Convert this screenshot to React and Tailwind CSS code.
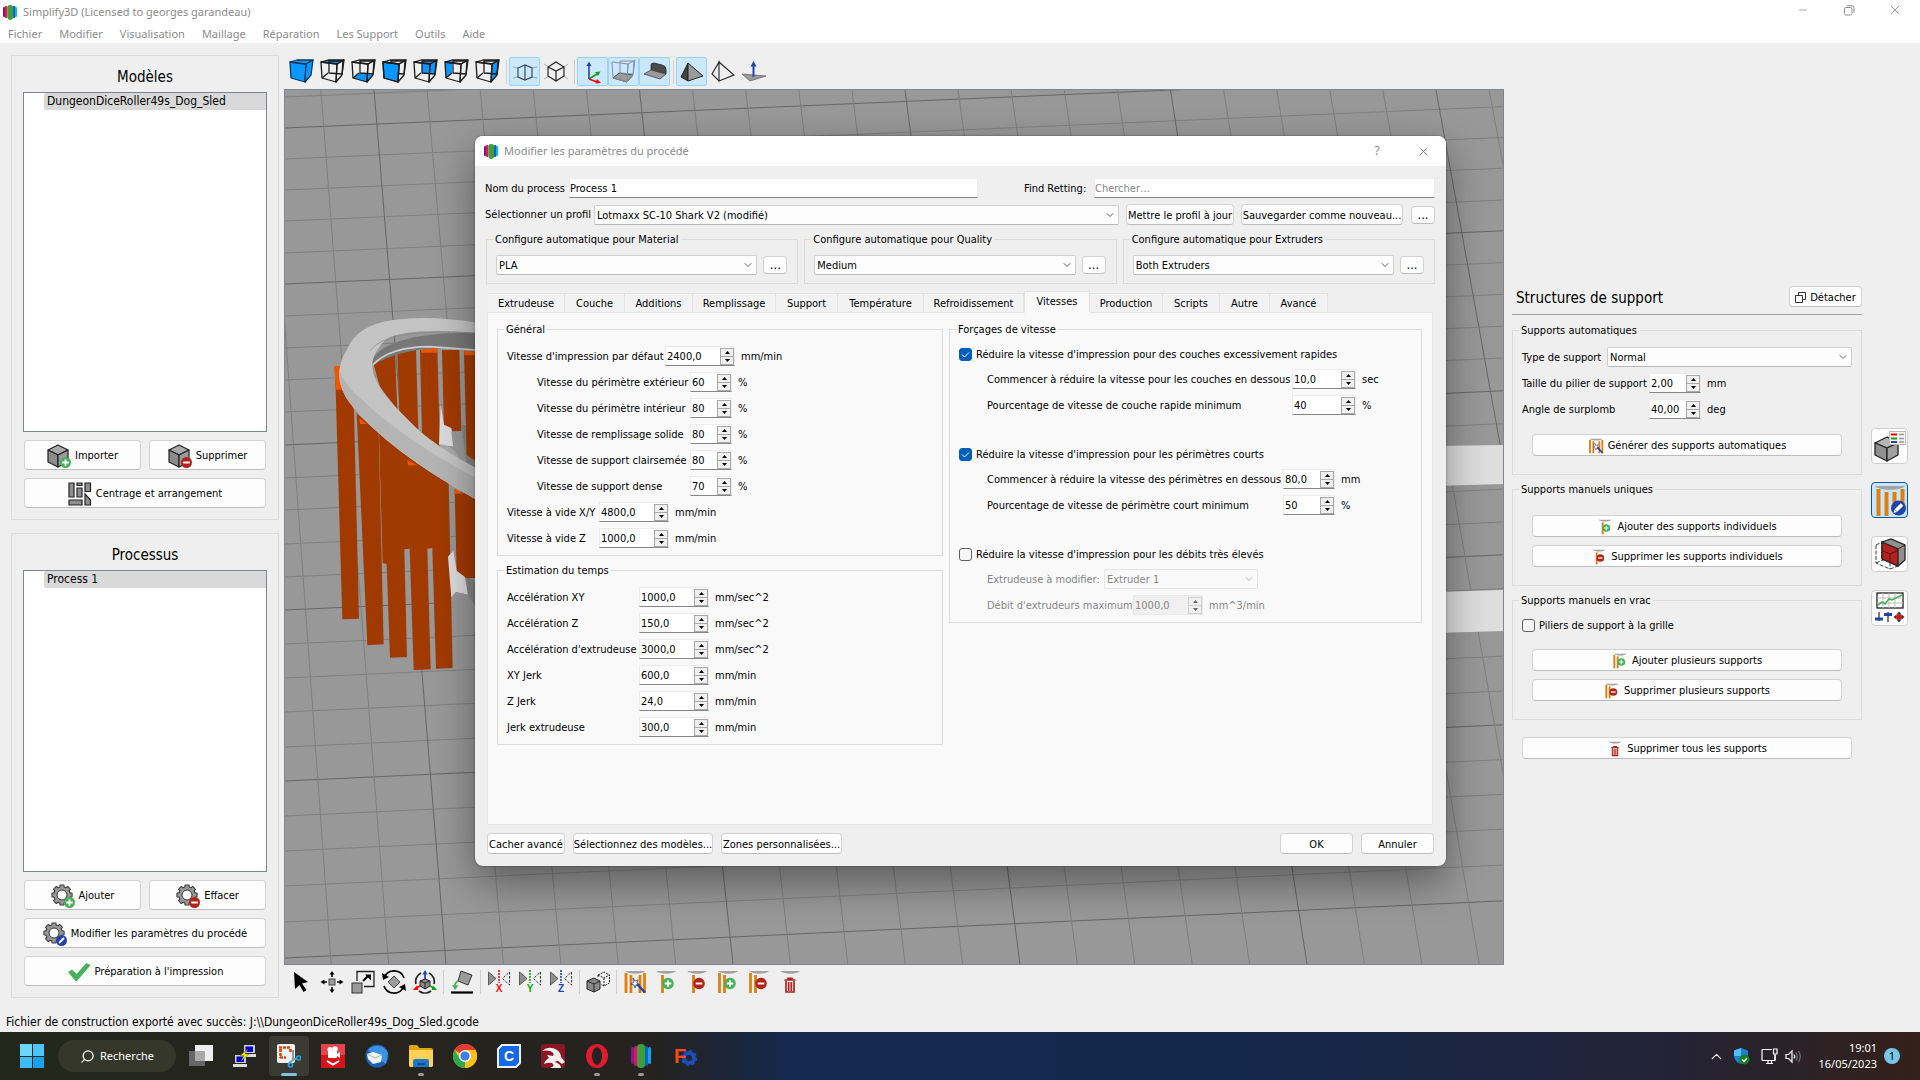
import React, { useId } from 'react';
import { ChevronDown, ChevronUp, Minus, Search, X } from 'lucide-react';

/* ---------- icons ---------- */

const FACES = {
    top: '1,3 8,1 24,1 17,5',
    bottom: '2,19 8,14 22,16 16,23',
    front: '1,3 17,5 16,23 2,19',
    back: '9,2 23,2 22,15 9,14',
    left: '1,3 8,1 8,14 2,19',
    right: '17,5 24,1 22,16 16,23',
};

const CubeView = ({ face }) => (
    <svg width="25" height="25" viewBox="0 0 25 25" fill="none" stroke="#1c1c1c" strokeWidth="1.3" strokeLinejoin="round">
        {face === 'all' ? (
            <g fill="#0a97ff" stroke="#0b3a5e">
                <polygon points={FACES.front} />
                <polygon points={FACES.top} />
                <polygon points={FACES.right} />
            </g>
        ) : (
            <>
                {face !== 'front' && <polygon points={FACES[face]} fill="#0a97ff" stroke="none" />}
                <polygon points={FACES.back} />
                <path d="M2 19 L8 14" />
                {face === 'front' && <polygon points={FACES.front} fill="#0a97ff" />}
                <polygon points={FACES.front} />
                <polygon points={FACES.top} />
                <polygon points={FACES.right} />
            </>
        )}
    </svg>
);

const Svg = ({ size = 24, box = 24, children }) => (
    <svg width={size} height={size} viewBox={`0 0 ${box} ${box}`} fill="none" className="shrink-0">
        {children}
    </svg>
);

const Badge = ({ kind, cx = 18.5, cy = 18.5, r = 5.5 }) => (
    <g>
        <circle cx={cx} cy={cy} r={r} fill={kind === 'plus' ? '#46b05a' : kind === 'minus' ? '#b3221c' : '#2244aa'} />
        {kind === 'plus' && <path d={`M${cx - 3.3} ${cy}h6.6M${cx} ${cy - 3.3}v6.6`} stroke="#fff" strokeWidth="1.8" />}
        {kind === 'minus' && <path d={`M${cx - 3.3} ${cy}h6.6`} stroke="#fff" strokeWidth="2" />}
        {kind === 'edit' && <path d={`M${cx - 2.5} ${cy + 2.5}l5 -5`} stroke="#fff" strokeWidth="2" />}
    </g>
);

const BoxIcon = ({ kind }) => (
    <Svg>
        <g stroke="#222" strokeWidth="1.2" strokeLinejoin="round">
            <path d="M1 6L11 1L21 6L11 11Z" fill="#a9a9a9" />
            <path d="M1 6L11 11V23L1 18Z" fill="#8b8b8b" />
            <path d="M21 6L11 11V23L21 18Z" fill="#9a9a9a" />
        </g>
        <Badge kind={kind} />
    </Svg>
);

// 8 teeth around the ring, dark outline first and the grey body over it
const GearIcon = ({ kind }) => (
    <Svg>
        {[0, 45, 90, 135].map((a) => (
            <rect key={a} x="8.4" y="0.4" width="5.2" height="21.2" rx="1" fill="#333" transform={`rotate(${a} 11 11)`} />
        ))}
        <circle cx="11" cy="11" r="8.8" fill="#333" />
        {[0, 45, 90, 135].map((a) => (
            <rect key={a} x="9.4" y="1.4" width="3.2" height="19.2" fill="#999" transform={`rotate(${a} 11 11)`} />
        ))}
        <circle cx="11" cy="11" r="7.8" fill="#999" />
        <circle cx="11" cy="11" r="5" fill="#fdfdfd" stroke="#333" />
        <Badge kind={kind} />
    </Svg>
);

const ArrangeIcon = () => (
    <Svg>
        <g fill="#8f8f8f" stroke="#222" strokeWidth="1.2">
            <path d="M1 1h5v14H1zM9 1h5v2.5H9zM9 6h5v9H9zM17 1h5.5v8.5H17zM1 18h13v5H1zM17 12l5.5 6v5H17z" />
        </g>
    </Svg>
);

const CheckIcon = () => (
    <Svg><path d="M1 12L5 9.5L9.5 14L19.5 3L23.5 5L10 21H8.5Z" fill="#46b05a" /></Svg>
);

const SupportIcon = ({ kind, size = 24, bars = 2 }) => (
    <Svg size={size}>
        <path d="M2 1H22C19 4.5 6 4.5 2 1Z" fill="#a3a3a3" />
        {kind === 'auto' && (
            <g>
                <path d="M3 3v20M8 5v18M17 5v18M21.5 3v20" stroke="#df7f0c" strokeWidth="2.8" />
                <path d="M10 8l2 3 3-1-1 3 3 2-4 0-1 3-1-3-3-1 3-2z" fill="#fff" stroke="#2244aa" strokeWidth="0.8" />
                <path d="M14 14L22 22.5" stroke="#2244aa" strokeWidth="2.4" />
            </g>
        )}
        {(kind === 'plus' || kind === 'minus') && (
            <g>
                {bars === 2 && <path d="M3.5 3v20" stroke="#df7f0c" strokeWidth="2.8" />}
                <path d="M8.5 5v18" stroke="#df7f0c" strokeWidth="2.8" />
                <Badge kind={kind} cx={14} cy={13.5} r={5.8} />
            </g>
        )}
        {kind === 'trash' && (
            <g stroke="#b3221c" strokeWidth="1.7">
                <path d="M6.5 10h11M10 9.5V8.3h4v1.2M8 11v11h8V11M10.7 12v9M13.3 12v9" />
            </g>
        )}
    </Svg>
);

const AppLogo = () => (
    <svg width="14" height="15" viewBox="0 0 14 15" className="shrink-0">
        <rect x="0" y="2" width="2" height="10" rx="1" fill="#6a1560" />
        <rect x="1.5" y="1" width="3" height="12" rx="1.3" fill="#e0116f" />
        <rect x="9.5" y="1" width="3" height="12" rx="1.3" fill="#1160d0" />
        <rect x="12" y="2" width="2" height="10" rx="1" fill="#12b5e5" />
        <rect x="4.5" y="0" width="5.5" height="15" rx="2.4" fill="#3da235" />
    </svg>
);

const MirrorIcon = ({ axis, color }) => (
    <Svg>
        <path d="M1.5 2v13L9 8.5Z" fill="#8f8f8f" stroke="#444" strokeWidth="0.8" />
        <path d="M12 0v13" stroke={color} strokeWidth="1.6" strokeDasharray="2 1" />
        <path d="M22.5 2v13L15.5 8.5Z" stroke="#333" strokeDasharray="2.5 1.5" />
        <text x="12" y="22" textAnchor="middle" fontSize="10" fontWeight="bold" fontFamily="Liberation Sans, sans-serif" fill={color}>{axis}</text>
    </Svg>
);

/* ---------- form controls ---------- */

const PushButton = ({ className = '', children }) => (
    <button type="button" className={`flex items-center justify-center whitespace-nowrap rounded border border-[#d2d2d2] border-b-[#bcbcbc] bg-[#fdfdfd] pt-[2px] ${className}`}>
        {children}
    </button>
);

const MoreButton = () => (
    <button type="button" className="h-[18px] w-6 shrink-0 rounded border border-[#d2d2d2] border-b-[#bcbcbc] bg-[#fdfdfd] text-[13px] leading-[14px]">...</button>
);

const TextField = ({ id, className = '', ...rest }) => (
    <input id={id} type="text" className={`h-5 min-w-0 border border-[#ececec] border-b-[#868686] bg-white pt-px outline-none placeholder:text-[#868686] ${className}`} {...rest} />
);

const Select = ({ id, value, className = '', disabled }) => (
    <div className={`relative h-5 ${className}`}>
        <select id={id} aria-label={value} disabled={disabled} className={`block h-full w-full appearance-none rounded-xs border pl-[2px] pr-5 pt-[2px] outline-none ${disabled ? 'border-[#e5e5e5] bg-[#fafafa] text-[#868686]' : 'border-[#d0d0d0] border-b-[#b8b8b8] bg-[#fdfdfd]'}`}>
            <option>{value}</option>
        </select>
        <ChevronDown size={12} strokeWidth={2} className={`pointer-events-none absolute right-[3px] top-1 ${disabled ? 'text-[#b5b5b5]' : 'text-[#606060]'}`} />
    </div>
);

const StepButton = ({ up, disabled }) => (
    <button type="button" aria-label={up ? 'Plus' : 'Moins'} disabled={disabled} className="flex h-[7px] w-full items-center justify-center bg-[#f0f0f0]">
        <svg width="5" height="3" viewBox="0 0 5 3"><path d={up ? 'M0 3L2.5 0L5 3Z' : 'M0 0L2.5 3L5 0Z'} fill={disabled ? '#666' : '#000'} /></svg>
    </button>
);

const Spin = ({ id, value, className = '', disabled }) => (
    <div className={`flex h-5 items-center border ${disabled ? 'border-[#e8e8e8] bg-[#f0f0f0]' : 'border-[#ececec] border-b-[#868686] bg-white'} ${className}`}>
        <input id={id} type="text" defaultValue={value} disabled={disabled} className="min-w-0 flex-1 bg-transparent pl-px pt-px outline-none" />
        <div className={`flex w-[14px] shrink-0 flex-col gap-px border ${disabled ? 'border-[#cfcfcf] bg-[#cfcfcf]' : 'border-[#a8a8a8] bg-[#a8a8a8]'}`}>
            <StepButton up disabled={disabled} />
            <StepButton disabled={disabled} />
        </div>
    </div>
);

const SpinRow = ({ label, labelClass, value, spinClass, unit, disabled }) => {
    const id = useId();
    return (
        <div className={`flex h-5 items-center whitespace-nowrap ${disabled ? 'text-[#868686]' : ''}`}>
            <label htmlFor={id} className={`shrink-0 pt-px ${labelClass}`}>{label}</label>
            <Spin id={id} value={value} className={`shrink-0 ${spinClass}`} disabled={disabled} />
            <span className="ml-[6px] pt-px">{unit}</span>
        </div>
    );
};

const Check = ({ label, checked }) => (
    <label className="flex h-5 items-center gap-1 whitespace-nowrap">
        <span className="relative flex">
            <input type="checkbox" defaultChecked={checked} className="peer size-[13px] appearance-none rounded-[3px] border border-[#606060] bg-[#f6f6f6] checked:border-[#005fb8] checked:bg-[#005fb8]" />
            <svg viewBox="0 0 13 13" className="pointer-events-none absolute inset-0 hidden size-[13px] peer-checked:block" fill="none"><path d="M3 6.5L5.5 9L10 4.5" stroke="#fff" /></svg>
        </span>
        <span className="pt-px">{label}</span>
    </label>
);

const Group = ({ title, className = '', bodyClass = '', children }) => (
    <fieldset className={`min-w-0 border border-[#dcdcdc] ${className}`}>
        <legend className="ml-[6px] h-[14px] px-[2px] leading-4">{title}</legend>
        <div className={bodyClass}>{children}</div>
    </fieldset>
);

/* ---------- window chrome ---------- */

const MENUS = ['Fichier', 'Modifier', 'Visualisation', 'Maillage', 'Réparation', 'Les Support', 'Outils', 'Aide'];

const TitleBar = () => (
    <header className="bg-white font-['Noto_Sans',sans-serif] text-[#8c8c8c]">
        <div className="flex h-6 items-center pl-[3px] pr-[2px]">
            <AppLogo />
            <span className="ml-[6px]">Simplify3D (Licensed to georges garandeau)</span>
            <div className="ml-auto flex items-center pb-1">
                <button type="button" aria-label="Réduire" className="flex w-[46px] justify-center"><Minus size={12} strokeWidth={1.5} /></button>
                <button type="button" aria-label="Restaurer" className="flex w-[46px] justify-center">
                    <svg width="11" height="11" viewBox="0 0 11 11" fill="none" stroke="currentColor"><rect x="0.5" y="2.5" width="7.5" height="7.5" rx="1.5" /><path d="M3 0.7h5a2 2 0 0 1 2 2v5" /></svg>
                </button>
                <button type="button" aria-label="Fermer" className="flex w-[46px] justify-center"><X size={14} strokeWidth={1.5} /></button>
            </div>
        </div>
        <nav className="flex h-[19px] items-center gap-px">
            {MENUS.map((m) => <button key={m} type="button" className="px-2">{m}</button>)}
        </nav>
    </header>
);

const ListPanel = ({ title, item, children }) => (
    <section className="flex flex-1 flex-col border border-[#dcdcdc] px-[11px] pb-[11px]">
        <h2 className="pt-[6px] text-center text-[15px] leading-[30px]">{title}</h2>
        <ul className="flex-1 border border-[#7f8590] bg-white">
            <li className="ml-5 rounded-l-xs bg-[#d9d9d9] pl-[3px] text-xs leading-[17px]">{item}</li>
        </ul>
        <div className="grid grid-cols-2 gap-2 px-px pt-2">{children}</div>
    </section>
);

const Sidebar = () => (
    <aside className="flex w-[284px] shrink-0 flex-col gap-[13px] pb-[14px] pl-[11px] pr-[5px] pt-3">
        <ListPanel title="Modèles" item="DungeonDiceRoller49s_Dog_Sled">
            <PushButton className="h-[30px] gap-1"><BoxIcon kind="plus" />Importer</PushButton>
            <PushButton className="h-[30px] gap-1"><BoxIcon kind="minus" />Supprimer</PushButton>
            <PushButton className="col-span-2 h-[30px] gap-1"><ArrangeIcon />Centrage et arrangement</PushButton>
        </ListPanel>
        <ListPanel title="Processus" item="Process 1">
            <PushButton className="h-[30px] gap-1"><GearIcon kind="plus" />Ajouter</PushButton>
            <PushButton className="h-[30px] gap-1"><GearIcon kind="minus" />Effacer</PushButton>
            <PushButton className="col-span-2 h-[30px] gap-1"><GearIcon kind="edit" />Modifier les paramètres du procédé</PushButton>
            <PushButton className="col-span-2 h-[30px] gap-1"><CheckIcon />Préparation à l'impression</PushButton>
        </ListPanel>
    </aside>
);

/* ---------- 3D view ---------- */

const ToolButton = ({ label, active, children }) => (
    <button type="button" aria-label={label} className={`flex h-[29px] w-[31px] items-center justify-center rounded-xs border ${active ? 'border-[#99d1ff] bg-[#cce8ff]' : 'border-transparent'}`}>
        {children}
    </button>
);

const Sep = () => <div className="ml-[3px] mr-[2px] h-6 w-px bg-[#cfcfcf]" />;

const ViewToolbar = () => (
    <div className="flex items-center px-[2px] pb-[3px] pt-[14px]">
        {['all', 'top', 'bottom', 'front', 'back', 'left', 'right'].map((f) => (
            <ToolButton key={f} label={f}><CubeView face={f} /></ToolButton>
        ))}
        <Sep />
        <ToolButton label="Perspective" active>
            <Svg>
                <path d="M0 7L5 8M24 7L19 8M0 18L5 17M24 18L19 17" stroke="#8aa" />
                <path d="M5 8L12 5L19 8V17L12 20L5 17ZM12 5V20" stroke="#3a4a56" strokeWidth="1.2" />
            </Svg>
        </ToolButton>
        <ToolButton label="Orthographique">
            <Svg>
                <path d="M0 4L5 7M24 4L20 7M0 19L5 16M24 19L20 16" stroke="#aaa" />
                <path d="M12 2L20 7V16L12 21L4 16V7ZM4 7L12 11L20 7M12 11V21" stroke="#222" strokeWidth="1.2" />
            </Svg>
        </ToolButton>
        <Sep />
        <ToolButton label="Axes" active>
            <Svg>
                <path d="M8 19V5" stroke="#2244aa" strokeWidth="1.6" /><path d="M5.5 6L8 1.5L10.5 6Z" fill="#2244aa" />
                <path d="M8 19L16 14" stroke="#12a012" strokeWidth="1.6" /><path d="M14 12L19.5 11.5L17 16Z" fill="#12a012" />
                <path d="M8 19L16 22" stroke="#f00" strokeWidth="1.6" /><path d="M14.5 23.5L20 23L16 19Z" fill="#f00" />
            </Svg>
        </ToolButton>
        <ToolButton label="Volume" active>
            <svg width="25" height="25" viewBox="0 0 25 25" fill="none" stroke="#7f93a2">
                <polygon points={FACES.bottom} fill="#9b9b9b" stroke="#444" />
                <polygon points={FACES.back} /><polygon points={FACES.front} /><polygon points={FACES.right} />
            </svg>
        </ToolButton>
        <ToolButton label="Plateau" active>
            <Svg>
                <path d="M8 5Q8 3 11 3L19 5Q23 6 23 9V14L8 10Z" fill="#4a4a4a" stroke="#222" strokeWidth="0.8" />
                <path d="M1 14L8 10L23 14L17 19Z" fill="#9b9b9b" stroke="#444" strokeWidth="0.8" />
            </Svg>
        </ToolButton>
        <Sep />
        <ToolButton label="Solide" active>
            <Svg>
                <path d="M8 3L1 17L8 21Z" fill="#444" stroke="#222" /><path d="M8 3L23 16L8 21Z" fill="#9b9b9b" stroke="#222" />
            </Svg>
        </ToolButton>
        <ToolButton label="Filaire">
            <Svg><path d="M8 2L1 14L8 21ZM8 2L23 15L8 21Z" stroke="#222" strokeWidth="1.1" /></Svg>
        </ToolButton>
        <ToolButton label="Normales">
            <Svg>
                <path d="M0 14L24 16L8 21Z" fill="#9b9b9b" stroke="#666" strokeWidth="0.8" />
                <path d="M11.5 17V5" stroke="#2244aa" strokeWidth="2" /><path d="M8.5 6.5L11.5 1L14.5 6.5Z" fill="#2244aa" />
            </Svg>
        </ToolButton>
    </div>
);

const EditToolbar = () => (
    <div className="flex items-center px-px pb-4 pt-[2px]">
        <ToolButton label="Sélection"><Svg><path d="M5 2L19 12L13 13.5L17.5 20L14.5 22L10.5 15L6 19Z" fill="#000" /></Svg></ToolButton>
        <ToolButton label="Déplacer">
            <Svg>
                <rect x="9" y="9" width="6" height="6" fill="#9b9b9b" stroke="#444" />
                <path d="M12 7V3M12 17v4M7 12H3M17 12h4" stroke="#000" strokeWidth="1.6" />
                <path d="M9.5 4.5L12 1L14.5 4.5ZM9.5 19.5L12 23L14.5 19.5ZM4.5 9.5L0.5 12L4.5 14.5ZM19.5 9.5L23.5 12L19.5 14.5Z" fill="#000" />
            </Svg>
        </ToolButton>
        <ToolButton label="Échelle">
            <Svg>
                <path d="M6 11V1.5H23V16.5H13" stroke="#222" strokeWidth="1.3" />
                <rect x="1" y="13" width="10" height="10" fill="#9b9b9b" stroke="#333" />
                <path d="M12 11L17 6" stroke="#000" strokeWidth="2" /><path d="M14 4.5H20V10.5Z" fill="#000" />
            </Svg>
        </ToolButton>
        <ToolButton label="Rotation">
            <Svg>
                <path d="M12 6L18 12L12 18L6 12Z" fill="#9b9b9b" stroke="#444" />
                <path d="M2.5 7A10.5 10.5 0 0 1 22 8M21.5 17A10.5 10.5 0 0 1 2 16" stroke="#000" strokeWidth="1.7" />
                <path d="M0 3L1 10L7 7ZM24 21L23 14L17 17Z" fill="#000" />
            </Svg>
        </ToolButton>
        <ToolButton label="Orienter">
            <Svg>
                <path d="M3 14A9.5 9.5 0 0 1 8 3M16 3A9.5 9.5 0 0 1 21 14M6 21A10 10 0 0 0 18 21" stroke="#222" strokeWidth="1.7" />
                <path d="M12 9L17 11V16L12 19L7 16V11Z" fill="#8b8b8b" stroke="#222" /><path d="M7 11L12 13L17 11M12 13V19" stroke="#222" />
                <path d="M12 9V4" stroke="#2244aa" strokeWidth="1.7" /><path d="M9.5 4.5L12 0L14.5 4.5Z" fill="#2244aa" />
                <path d="M7 16L3 18" stroke="#f00" strokeWidth="1.7" /><path d="M4 15.5L0 20L5.5 20Z" fill="#f00" />
                <path d="M17 16L21 18" stroke="#12a012" strokeWidth="1.7" /><path d="M20 15.5L24 20L18.5 20Z" fill="#12a012" />
            </Svg>
        </ToolButton>
        <Sep />
        <ToolButton label="Poser sur la table">
            <Svg>
                <path d="M11 1L22 5L18 15L8 11Z" fill="#9b9b9b" stroke="#333" />
                <path d="M8 11Q4 13 5 18" stroke="#46b05a" strokeWidth="1.6" /><path d="M2 15L5 20L8.5 15.5Z" fill="#46b05a" />
                <path d="M1 22.5h22" stroke="#000" strokeWidth="2.2" />
            </Svg>
        </ToolButton>
        <Sep />
        <ToolButton label="Miroir X"><MirrorIcon axis="X" color="#f01010" /></ToolButton>
        <ToolButton label="Miroir Y"><MirrorIcon axis="Y" color="#12a012" /></ToolButton>
        <ToolButton label="Miroir Z"><MirrorIcon axis="Z" color="#2244aa" /></ToolButton>
        <Sep />
        <ToolButton label="Dupliquer">
            <Svg>
                <path d="M1 11L8 8L14 11V19L8 22L1 19Z" fill="#8b8b8b" stroke="#222" /><path d="M1 11L8 14L14 11M8 14V22" stroke="#222" />
                <path d="M12 5L18 2L23.5 5V13L18 16L15 14.5M12 5V8M12 5L18 8L23.5 5M18 8V16" stroke="#222" strokeDasharray="2 1" />
            </Svg>
        </ToolButton>
        <Sep />
        <ToolButton label="Supports automatiques"><SupportIcon kind="auto" /></ToolButton>
        <ToolButton label="Ajouter un support"><SupportIcon kind="plus" bars={1} /></ToolButton>
        <ToolButton label="Supprimer un support"><SupportIcon kind="minus" bars={1} /></ToolButton>
        <ToolButton label="Ajouter des supports"><SupportIcon kind="plus" /></ToolButton>
        <ToolButton label="Supprimer des supports"><SupportIcon kind="minus" /></ToolButton>
        <ToolButton label="Tout supprimer"><SupportIcon kind="trash" /></ToolButton>
    </div>
);

// y of each cross line at the left edge of the view; every fifth or so is a major line
const ROWS = [7, 38, 69, 100, 131, 163, 194, 226, 258, 290, 322, 355, 388, 420, 454, 487, 520, 554, 588, 622, 657, 691, 726, 761, 796, 832, 868];
const COLS = Array.from({ length: 31 }, (_, i) => i - 9);

const Scene = () => (
    <svg className="block h-full w-full" viewBox="0 0 1218 874" preserveAspectRatio="xMinYMin slice">
        <rect width="1218" height="874" fill="#989898" />
        {ROWS.map((y, i) => (
            <line key={y} x1="0" y1={y} x2="1218" y2={y - 52 - i * 0.2} stroke={i % 5 === 1 ? '#666' : '#7f7f7f'} />
        ))}
        {COLS.map((k) => (
            <line key={k} x1={89 + k * 53.1} y1="0" x2={161 + k * 57.4} y2="874" stroke={k % 5 === 0 ? '#666' : '#7f7f7f'} />
        ))}
        <g transform="translate(35 210) scale(0.3333)">
            {/* shadows behind the ring */}
            <path d="M425 375L470 375V540L440 500Z" fill="#858585" />
            <path d="M440 830L470 850V930L440 885Z" fill="#858585" />
            {/* inner supports */}
            <g fill="#a13a00">
                <path d="M160 190L225 160L232 330L180 260Z" />
                <path d="M232 158L288 150L295 390L238 335Z" />
                <path d="M300 150L352 145L360 440L306 400Z" />
                <path d="M366 150L418 150L424 394L372 394Z" />
                <path d="M432 152L470 155V485L440 465Z" />
            </g>
            <path d="M302 150L352 142V158H304ZM432 152L470 155V166H434Z" fill="#ee5600" />
            <path d="M150 190Q190 95 470 98V152Q280 125 160 195Z" fill="#777" />
            <path d="M158 195Q210 140 330 140L470 150" stroke="#cfcfcf" strokeWidth="5" fill="none" />
            {/* outer supports */}
            <g fill="#a13a00">
                <path d="M45 200L102 330L117 956L67 958Z" />
                <path d="M110 340L176 400L191 1033L142 1036Z" />
                <path d="M177 400L386 545L398 1104L348 1106L337 744L322 746L332 1108L281 1110L269 746L253 748L261 1071L210 1073L200 792L188 790Z" />
                <path d="M404 570L470 590V834H438L410 815Z" />
            </g>
            <path d="M42 198H60L66 269H48ZM118 355L140 372H120ZM262 480L292 496H264ZM403 565L430 581H404Z" fill="#ee5600" />
            {/* struts */}
            <path d="M362 315L372 374L394 384L406 440L357 434Z" fill="#dcdcdc" />
            <path d="M394 394H424L440 500L404 480Z" fill="#999" />
            <path d="M384 770L400 752L410 812L434 830L444 884L408 876L394 892Z" fill="#dcdcdc" />
            <path d="M408 876L444 884L470 925V1000L400 980L394 892Z" fill="#989898" />
            <path d="M357 434Q400 430 425 490L400 480Z" fill="#ababab" />
            {/* ring */}
            <path d="M470 68Q330 45 220 60Q110 75 80 150Q30 230 90 310Q200 450 470 600V505Q330 430 270 365Q160 260 158 205Q150 170 195 120Q250 82 470 98Z" fill="#c4c4c4" />
            <path d="M90 310Q200 450 470 600V535Q250 420 110 285Q70 245 60 215Q58 270 90 310Z" fill="#b4b4b4" />
            <path d="M150 152Q200 82 470 100" stroke="#888" strokeWidth="2" fill="none" />
        </g>
        {/* far runners */}
        <path d="M1150 356L1218 355V394L1150 396Z" fill="#dedede" />
        <path d="M1150 502L1218 500V541L1150 543Z" fill="#dedede" />
    </svg>
);

/* ---------- settings dialog ---------- */

const TABS = [
    ['Extrudeuse', 'w-[77px]'], ['Couche', 'w-[60px]'], ['Additions', 'w-[68px]'], ['Remplissage', 'w-[83px]'],
    ['Support', 'w-[62px]'], ['Température', 'w-[86px]'], ['Refroidissement', 'w-[100px]'], ['Vitesses', 'w-[66px]'],
    ['Production', 'w-[73px]'], ['Scripts', 'w-[57px]'], ['Autre', 'w-[50px]'], ['Avancé', 'w-[58px]'],
];

const PRESETS = [['Material', 'PLA'], ['Quality', 'Medium'], ['Extruders', 'Both Extruders']];

const PERCENTS = [
    ['Vitesse du périmètre extérieur', '60'],
    ['Vitesse du périmètre intérieur', '80'],
    ['Vitesse de remplissage solide', '80'],
    ['Vitesse de support clairsemée', '80'],
    ['Vitesse de support dense', '70'],
];

const TIMINGS = [
    ['Accélération XY', '1000,0', 'mm/sec^2'],
    ['Accélération Z', '150,0', 'mm/sec^2'],
    ["Accélération d'extrudeuse", '3000,0', 'mm/sec^2'],
    ['XY Jerk', '600,0', 'mm/min'],
    ['Z Jerk', '24,0', 'mm/min'],
    ['Jerk extrudeuse', '300,0', 'mm/min'],
];

const SpeedTab = () => (
    <div className="mx-[2px] flex min-h-[513px] items-start gap-[6px] border border-[#e5e5e5] bg-[#f9f9f9] pl-[9px] pr-[10px] pt-[9px]">
        <div className="flex w-[446px] shrink-0 flex-col gap-[7px]">
            <Group title="Général" bodyClass="flex flex-col gap-[6px] pb-[7px] pl-[9px] pt-[10px]">
                <SpinRow label="Vitesse d'impression par défaut" labelClass="w-[158px]" value="2400,0" spinClass="w-[70px]" unit="mm/min" />
                {PERCENTS.map(([label, value]) => (
                    <SpinRow key={label} label={label} labelClass="w-[183px] pl-[30px]" value={value} spinClass="w-[42px]" unit="%" />
                ))}
                <SpinRow label="Vitesse à vide X/Y" labelClass="w-[92px]" value="4800,0" spinClass="w-[70px]" unit="mm/min" />
                <SpinRow label="Vitesse à vide Z" labelClass="w-[92px]" value="1000,0" spinClass="w-[70px]" unit="mm/min" />
            </Group>
            <Group title="Estimation du temps" bodyClass="flex flex-col gap-[6px] pb-[7px] pl-[9px] pt-[10px]">
                {TIMINGS.map(([label, value, unit]) => (
                    <SpinRow key={label} label={label} labelClass="w-[132px]" value={value} spinClass="w-[70px]" unit={unit} />
                ))}
            </Group>
        </div>
        <Group title="Forçages de vitesse" className="flex-1" bodyClass="flex flex-col gap-[29px] pb-[7px] pl-[9px] pt-2">
            <div>
                <Check label="Réduire la vitesse d'impression pour des couches excessivement rapides" checked />
                <div className="mt-[5px] flex flex-col gap-[6px] pl-7">
                    <SpinRow label="Commencer à réduire la vitesse pour les couches en dessous" labelClass="w-[305px]" value="10,0" spinClass="w-[64px]" unit="sec" />
                    <SpinRow label="Pourcentage de vitesse de couche rapide minimum" labelClass="w-[305px]" value="40" spinClass="w-[64px]" unit="%" />
                </div>
            </div>
            <div>
                <Check label="Réduire la vitesse d'impression pour les périmètres courts" checked />
                <div className="mt-[5px] flex flex-col gap-[6px] pl-7">
                    <SpinRow label="Commencer à réduire la vitesse des périmètres en dessous" labelClass="w-[296px]" value="80,0" spinClass="w-[52px]" unit="mm" />
                    <SpinRow label="Pourcentage de vitesse de périmètre court minimum" labelClass="w-[296px]" value="50" spinClass="w-[52px]" unit="%" />
                </div>
            </div>
            <div>
                <Check label="Réduire la vitesse d'impression pour les débits très élevés" />
                <div className="mt-[5px] flex flex-col gap-[6px] pl-7">
                    <div className="flex h-5 items-center text-[#868686]">
                        <label htmlFor="extruder" className="w-[117px] pt-px">Extrudeuse à modifier:</label>
                        <Select id="extruder" value="Extruder 1" className="w-[154px]" disabled />
                    </div>
                    <SpinRow label="Débit d'extrudeurs maximum" labelClass="w-[146px]" value="1000,0" spinClass="w-[70px]" unit="mm^3/min" disabled />
                </div>
            </div>
        </Group>
    </div>
);

const ProcessDialog = () => (
    <div role="dialog" aria-label="Modifier les paramètres du procédé" className="absolute left-[475px] top-[136px] w-[971px] overflow-hidden rounded-lg bg-[#efefef] shadow-[0_16px_40px_rgba(0,0,0,0.4),0_0_2px_rgba(0,0,0,0.5)]">
        <div className="flex h-[30px] items-center bg-white pl-[9px] font-['Noto_Sans',sans-serif] text-[#8c8c8c]">
            <AppLogo />
            <span className="ml-[6px]">Modifier les paramètres du procédé</span>
            <button type="button" className="ml-auto w-[46px] text-xs">?</button>
            <button type="button" aria-label="Fermer" className="flex w-[46px] justify-center"><X size={15} strokeWidth={1.5} /></button>
        </div>
        <div className="pb-3 pl-[10px] pr-[11px] pt-3">
            <div className="flex items-center">
                <label htmlFor="process" className="w-[84px] pt-px">Nom du process</label>
                <TextField id="process" defaultValue="Process 1" className="flex-1" />
                <label htmlFor="find" className="w-[116px] pl-[46px] pt-px">Find Retting:</label>
                <TextField id="find" placeholder="Chercher…" className="w-[341px]" />
            </div>
            <div className="mt-[6px] flex items-center">
                <label htmlFor="profile" className="w-[109px] whitespace-nowrap pt-px">Sélectionner un profil</label>
                <Select id="profile" value="Lotmaxx SC-10 Shark V2 (modifié)" className="flex-1" />
                <PushButton className="ml-[7px] h-[21px] w-[108px]">Mettre le profil à jour</PushButton>
                <PushButton className="ml-[7px] mr-2 h-[21px] w-[162px]">Sauvegarder comme nouveau...</PushButton>
                <MoreButton />
            </div>
            <div className="mt-[7px] grid grid-cols-3 gap-[6px] pl-px">
                {PRESETS.map(([name, value]) => (
                    <Group key={name} title={`Configure automatique pour ${name}`} bodyClass="flex items-center gap-[6px] pb-2 pl-[9px] pr-[10px] pt-[9px]">
                        <Select value={value} className="flex-1" />
                        <MoreButton />
                    </Group>
                ))}
            </div>
            <div className="mt-[7px] flex h-[21px] items-end pl-[3px]" role="tablist">
                {TABS.map(([name, width]) => (
                    <button
                        key={name}
                        type="button"
                        role="tab"
                        aria-selected={name === 'Vitesses'}
                        className={`border border-[#e2e2e2] whitespace-nowrap ${width} ${name === 'Vitesses' ? 'z-10 -mb-px h-[22px] border-b-[#f9f9f9] bg-[#f9f9f9]' : 'h-[19px] border-b-0 border-l-0 bg-[#f2f2f2] pt-px'}`}
                    >
                        {name}
                    </button>
                ))}
            </div>
            <SpeedTab />
            <div className="mt-[8px] flex gap-2 pl-[2px] pr-px">
                <PushButton className="h-[21px] w-[78px]">Cacher avancé</PushButton>
                <PushButton className="h-[21px] w-[140px]">Sélectionnez des modèles...</PushButton>
                <PushButton className="h-[21px] w-[121px]">Zones personnalisées...</PushButton>
                <PushButton className="ml-auto h-[21px] w-[73px]">OK</PushButton>
                <PushButton className="h-[21px] w-[73px]">Annuler</PushButton>
            </div>
        </div>
    </div>
);

/* ---------- support panel ---------- */

const SupportPanel = () => (
    <section className="flex-1 pb-[10px]">
        <div className="flex h-[29px] items-start justify-between border-b border-[#a0a0a0] pl-1">
            <h2 className="text-[15px] leading-6">Structures de support</h2>
            <PushButton className="h-[21px] w-[73px] gap-1">
                <svg width="11" height="11" viewBox="0 0 11 11" fill="none" stroke="#333"><path d="M0.5 3.5h7v7h-7zM3.5 3V0.5h7v7H8" /></svg>
                Détacher
            </PushButton>
        </div>
        <Group title="Supports automatiques" className="mt-2" bodyClass="flex flex-col gap-[6px] px-[9px] pb-[18px] pt-[10px]">
            <div className="flex h-5 items-center">
                <label htmlFor="type" className="w-[85px] pt-px">Type de support</label>
                <Select id="type" value="Normal" className="flex-1" />
            </div>
            <SpinRow label="Taille du pilier de support" labelClass="w-[127px]" value="2,00" spinClass="w-[52px]" unit="mm" />
            <SpinRow label="Angle de surplomb" labelClass="w-[127px]" value="40,00" spinClass="w-[52px]" unit="deg" />
            <PushButton className="mx-[10px] mt-[9px] h-[22px] gap-1"><SupportIcon kind="auto" size={16} />Générer des supports automatiques</PushButton>
        </Group>
        <Group title="Supports manuels uniques" className="mt-[7px]" bodyClass="flex flex-col gap-2 px-[19px] pb-[18px] pt-[19px]">
            <PushButton className="h-[22px] gap-1"><SupportIcon kind="plus" bars={1} size={16} />Ajouter des supports individuels</PushButton>
            <PushButton className="h-[22px] gap-1"><SupportIcon kind="minus" bars={1} size={16} />Supprimer les supports individuels</PushButton>
        </Group>
        <Group title="Supports manuels en vrac" className="mt-[7px]" bodyClass="px-[9px] pb-[18px] pt-2">
            <Check label="Piliers de support à la grille" />
            <div className="mt-[14px] flex flex-col gap-2 px-[10px]">
                <PushButton className="h-[22px] gap-1"><SupportIcon kind="plus" size={16} />Ajouter plusieurs supports</PushButton>
                <PushButton className="h-[22px] gap-1"><SupportIcon kind="minus" size={16} />Supprimer plusieurs supports</PushButton>
            </div>
        </Group>
        <div className="mt-[17px] px-[10px]">
            <PushButton className="h-[22px] w-full gap-1"><SupportIcon kind="trash" size={16} />Supprimer tous les supports</PushButton>
        </div>
    </section>
);

const SideButton = ({ label, active, children }) => (
    <button type="button" aria-label={label} className={`flex h-9 w-[37px] items-center justify-center rounded border ${active ? 'border-[#005a9e] bg-[#cce4f7]' : 'border-[#cfcfcf] bg-[#fdfdfd]'}`}>
        {children}
    </button>
);

const SideButtons = () => (
    <div className="flex flex-col gap-[18px] pb-[2px]">
        <SideButton label="Propriétés du modèle">
            <Svg size={32} box={32}>
                <g stroke="#222" strokeWidth="1.3" strokeLinejoin="round">
                    <path d="M1 13L13 7L24 13L13 18Z" fill="#b5b5b5" /><path d="M1 13L13 18V31L1 25Z" fill="#8f8f8f" /><path d="M24 13L13 18V31L24 25Z" fill="#a0a0a0" />
                </g>
                <rect x="15.5" y="1.5" width="16" height="13" fill="#f6f6f6" stroke="#bbb" />
                <path d="M17 4.5h6" stroke="#f00" strokeWidth="2" /><path d="M17 8.5h6" stroke="#12a012" strokeWidth="2" /><path d="M17 12h6" stroke="#2244aa" strokeWidth="2" />
                <path d="M25 4.5h5M25 8.5h5M25 12h5" stroke="#999" strokeWidth="1.5" />
            </Svg>
        </SideButton>
        <SideButton label="Structures de support" active>
            <Svg size={32} box={32}>
                <path d="M1 2H31C27 7 5 7 1 2Z" fill="#a3a3a3" />
                <path d="M4.5 5v27M12.5 8v24M20.5 8v16M28.5 5v18" stroke="#df7f0c" strokeWidth="4" />
                <circle cx="24.5" cy="24" r="7.5" fill="#2244aa" />
                <path d="M22 26.5L28 20.5" stroke="#fff" strokeWidth="3.5" /><path d="M19.5 29L20.5 25.5L23 28Z" fill="#fff" />
            </Svg>
        </SideButton>
        <SideButton label="Coupe">
            <Svg size={32} box={32}>
                <path d="M2 7L8 4M2 7V25L16 31L24 28M16 19V31M2 25L16 19" stroke="#444" strokeDasharray="4 1.5" />
                <path d="M8 4L17 1L31 7V22L24 28L8 20Z" fill="#8f8f8f" stroke="#222" strokeWidth="1.3" />
                <path d="M8 4L24 11V28L8 21Z" fill="#b3221c" stroke="#222" strokeWidth="1.3" />
                <path d="M24 11L31 7M9 13L16 16L23 13M16 16V23" stroke="#5d0f0c" />
            </Svg>
        </SideButton>
        <SideButton label="Contrôle machine">
            <Svg size={32} box={32}>
                <rect x="3" y="1" width="26" height="15" fill="#fff" stroke="#222" strokeWidth="1.3" />
                <path d="M9 1v15M15 1v15M21 1v15M3 6h26M3 11h26" stroke="#bbb" />
                <path d="M4 13L8 10L11 12L15 7L18 8L28 3" stroke="#46b05a" strokeWidth="1.6" />
                <path d="M5 20v9M14 20v10" stroke="#333" strokeWidth="1.3" />
                <path d="M1 27h8M10 22.5h8" stroke="#2244aa" strokeWidth="3" />
                <path d="M25 19.5l2.5 3h-5zM25 30.5l2.5-3h-5zM19.5 25l3-2.5v5zM30.5 25l-3-2.5v5z" fill="#333" />
                <circle cx="25" cy="25" r="3" fill="#d01a1a" />
            </Svg>
        </SideButton>
    </div>
);

/* ---------- taskbar ---------- */

const TASKS = [
    { name: 'Bureaux', icon: <><rect x="0" y="7" width="16" height="15" fill="#666" /><rect x="6" y="1" width="18" height="16" fill="#eee" /><rect x="6" y="7" width="10" height="10" fill="#aaa" /></> },
    { name: 'PuTTY', icon: <><rect x="11" y="1" width="11" height="8" fill="#ccc" /><rect x="12.5" y="2.5" width="7.5" height="5.5" fill="#00c" /><path d="M10 10h13v3H10z" fill="#ddd" /><rect x="2" y="11" width="11" height="8" fill="#ccc" /><rect x="3.5" y="12.5" width="7.5" height="5.5" fill="#00c" /><path d="M0 20h14v3H0z" fill="#ddd" /><path d="M15 5L7 11.5H11L8 17L16 10H12Z" fill="#ffee00" stroke="#554" strokeWidth="0.5" /></> },
    { name: 'Capture', active: true, icon: <><rect x="0" y="0" width="18" height="19" rx="2" fill="#f2f2f2" /><path d="M2 3.5h12M3.5 5v9M3 13.5h6M13.5 5v3" stroke="#e2430d" strokeWidth="2.6" strokeDasharray="3 1" /><path d="M16 6V16L12 19M16 15L20 15" stroke="#8b9aa5" strokeWidth="2" /><circle cx="21.5" cy="14" r="2" stroke="#27a3e6" strokeWidth="1.6" /><circle cx="13.5" cy="21" r="2" stroke="#27a3e6" strokeWidth="1.6" /></> },
    { name: 'Vidéo', icon: <><rect width="24" height="24" fill="#d4131b" /><path d="M0 0H24V11H0Z" fill="#e8434a" /><circle cx="9" cy="5.5" r="2.6" fill="#fff" /><circle cx="14" cy="5" r="2.8" fill="#fff" /><rect x="7" y="7" width="9" height="7" rx="1" fill="#fff" /><path d="M16 10l3-2v6l-3-2z" fill="#fff" /><path d="M6 17L12 20.5L18 17" stroke="#fff" strokeWidth="2" /></> },
    { name: 'Thunderbird', icon: <><circle cx="12" cy="12" r="11.5" fill="#1d5fb5" /><path d="M3 6A12 12 0 0 1 23 9L21 20L14 15Z" fill="#3c93e2" /><path d="M2 10L8 8L17 11L16 18L8 20L3 15Z" fill="#f1f4f7" /><path d="M2 10L10 14L17 11" stroke="#9fb3c6" /></> },
    { name: 'Explorateur', dot: true, icon: <><path d="M0 2.5Q0 1 1.5 1H8L10.5 4H22Q24 4 24 6V21Q24 23 22 23H2Q0 23 0 21Z" fill="#e5a50a" /><path d="M0 6H24V21Q24 23 22 23H2Q0 23 0 21Z" fill="#ffd257" /><path d="M4 17Q4 15 6 15H18Q20 15 20 17V23H4Z" fill="#1b78c9" /><rect x="8" y="19" width="8" height="2" fill="#0b4f91" /></> },
    { name: 'Chrome', icon: <><circle cx="12" cy="12" r="12" fill="#fbc116" /><path d="M12 12L1.6 6A12 12 0 0 1 22.4 6Z" fill="#e33b2e" /><path d="M12 6H22.4A12 12 0 0 1 12 24L17 15Z" fill="#fbc116" /><path d="M1.6 6L7 15L12 17.5L12 24A12 12 0 0 1 1.6 6Z" fill="#2da94f" /><circle cx="12" cy="12" r="6" fill="#fff" /><circle cx="12" cy="12" r="4.6" fill="#3f7ee8" /></> },
    { name: 'Cura', icon: <><path d="M5 1H23V19L19 23H1V5Z" fill="#1668e6" stroke="#e9f1ff" strokeWidth="2" /><text x="12" y="17" textAnchor="middle" fontSize="14" fontWeight="bold" fontFamily="Liberation Sans, sans-serif" fill="#fff">C</text></> },
    { name: 'Dragon', icon: <><rect width="24" height="24" rx="2" fill="#8a1824" /><path d="M1 7Q8 1 16 6Q20 9 20 13L24 18L21 20L17 17Q14 17 14 18Q20 20 20 24H9Q15 22 11 19Q7 18 3 20Q4 16 8 14L6 11L12 12Q14 9 9 7Q5 6 1 7Z" fill="#f4f0f0" /></> },
    { name: 'Opera', dot: true, icon: <><ellipse cx="12" cy="12" rx="11" ry="12" fill="#e01b2e" /><ellipse cx="12" cy="12" rx="5" ry="9" fill="#25221f" /></> },
    { name: 'Simplify3D', dot: true, icon: <><rect x="2" y="3" width="3" height="17" rx="1.5" fill="#8b1a86" /><rect x="5" y="2" width="4" height="20" rx="2" fill="#e0116f" /><rect x="15" y="2" width="4" height="20" rx="2" fill="#1160d0" /><rect x="19" y="3" width="3" height="17" rx="1.5" fill="#12a5e5" /><rect x="8" y="0" width="8" height="24" rx="3.5" fill="#3da235" /></> },
    { name: 'FreeCAD', icon: <><circle cx="16" cy="14" r="5" stroke="#1a4fb8" strokeWidth="4" /><circle cx="16" cy="14" r="7.3" stroke="#1a4fb8" strokeWidth="1.8" strokeDasharray="2.8 2.93" /><text x="1" y="19" fontSize="20" fontWeight="bold" fontFamily="Liberation Sans, sans-serif" fill="#ff4a0d">F</text></> },
];

const Taskbar = () => (
    <footer className="flex h-12 items-center bg-[linear-gradient(90deg,#22271b,#26241e_20%,#25221f_34%,#14294d_41%,#14284c_65%,#22243a_85%,#33211a)] font-['Noto_Sans',sans-serif] text-white">
        <button type="button" aria-label="Démarrer" className="ml-5 grid size-6 grid-cols-2 gap-px">
            <span className="bg-[#6fd6fb]" /><span className="bg-[#4cc6f8]" /><span className="bg-[#3dbcf7]" /><span className="bg-[#16a4f2]" />
        </button>
        <button type="button" className="ml-[14px] flex h-8 w-[118px] items-center gap-[5px] rounded-full bg-[#343729] pl-[22px]">
            <Search size={15} strokeWidth={2} className="-scale-x-100" />Recherche
        </button>
        <div className="ml-[3px] flex">
            {TASKS.map((t) => (
                <button key={t.name} type="button" aria-label={t.name} className={`relative mx-[2px] flex h-10 w-10 items-center justify-center rounded ${t.active ? 'bg-white/10' : ''}`}>
                    <Svg>{t.icon}</Svg>
                    {t.active && <span className="absolute bottom-0 h-[3px] w-4 rounded-full bg-[#7cc4e6]" />}
                    {t.dot && <span className="absolute bottom-0 h-[3px] w-[6px] rounded-full bg-[#9a9a9a]" />}
                </button>
            ))}
        </div>
        <div className="ml-auto flex items-center pr-5">
            <ChevronUp size={17} strokeWidth={1.5} />
            <svg width="17" height="17" viewBox="0 0 17 17" className="ml-2">
                <path d="M8 0L15 2.5V8Q15 13 8 16Q1 13 1 8V2.5Z" fill="#1b7fd4" /><path d="M8 0L1 2.5V8H8Z" fill="#4cc2f5" />
                <circle cx="11.5" cy="11.5" r="5" fill="#12821c" /><path d="M9 11.5L11 13.5L14 10" stroke="#fff" strokeWidth="1.4" fill="none" />
            </svg>
            <svg width="17" height="17" viewBox="0 0 17 17" className="ml-[11px]" fill="none" stroke="#fff" strokeWidth="1.2">
                <path d="M11 1.5H2Q1 1.5 1 2.5V11.5Q1 12.5 2 12.5H14V7M5 15.5h7M7 12.5v3M10.5 12.5v3" /><path d="M12.5 1h3.5v5h-3.5zM14 6v6" />
            </svg>
            <svg width="17" height="15" viewBox="0 0 17 15" className="ml-[7px]" fill="none" stroke="#fff" strokeWidth="1.2">
                <path d="M1 5.5H3.5L7 2V13L3.5 9.5H1Z" /><path d="M9 5.5Q10.5 7.5 9 9.5" /><path d="M11 3.5Q13.5 7.5 11 11.5M13.5 2Q17 7.5 13.5 13" stroke="#777" />
            </svg>
            <div className="ml-[13px] w-[62px] text-right leading-4">
                <div>19:01</div>
                <div>16/05/2023</div>
            </div>
            <span className="ml-[7px] flex size-4 items-center justify-center rounded-full bg-[#79c5e8] leading-4 text-black">1</span>
        </div>
    </footer>
);

export default function App() {
    return (
        <div className="relative flex min-h-screen flex-col bg-[#efefef] font-['DejaVu_Sans_Condensed','DejaVu_Sans',sans-serif] text-[11px] leading-[14px] text-black">
            <TitleBar />
            <main className="flex flex-1">
                <Sidebar />
                <div className="flex min-w-0 flex-1 flex-col">
                    <ViewToolbar />
                    <div className="relative flex-1 border border-[#7f8590]">
                        <div className="absolute inset-0"><Scene /></div>
                    </div>
                    <EditToolbar />
                </div>
                <div className="flex w-[416px] shrink-0 items-center gap-[9px] pl-2 pr-3">
                    <SupportPanel />
                    <SideButtons />
                </div>
            </main>
            <div className="h-5 pl-[6px] text-xs leading-5">Fichier de construction exporté avec succès: J:\\DungeonDiceRoller49s_Dog_Sled.gcode</div>
            <Taskbar />
            <ProcessDialog />
        </div>
    );
}
